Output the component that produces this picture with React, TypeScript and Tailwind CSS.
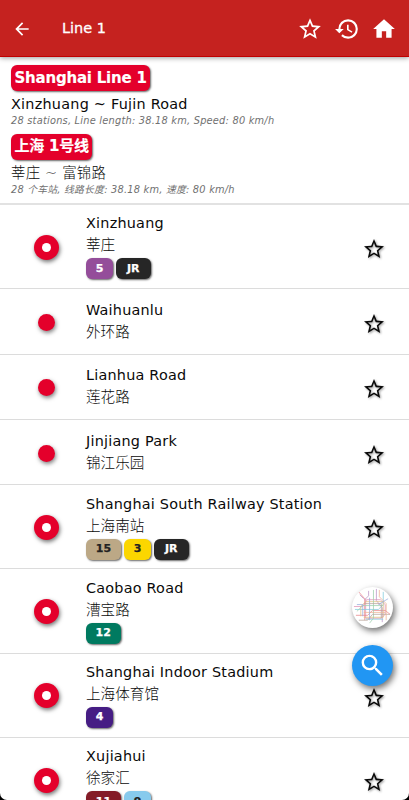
import { MdArrowBack, MdHistory, MdHome, MdSearch, MdStarOutline } from "react-icons/md";

type Transfer = { label: string; className: string };

type Station = {
  name: string;
  localName: string;
  transfers: Transfer[];
};

const JR: Transfer = { label: "JR", className: "bg-[#262626] text-white w-[34.5px]" };

const stations: Station[] = [
  {
    name: "Xinzhuang",
    localName: "莘庄",
    transfers: [{ label: "5", className: "bg-[#944d9a] text-white w-[27px]" }, JR],
  },
  { name: "Waihuanlu", localName: "外环路", transfers: [] },
  { name: "Lianhua Road", localName: "莲花路", transfers: [] },
  { name: "Jinjiang Park", localName: "锦江乐园", transfers: [] },
  {
    name: "Shanghai South Railway Station",
    localName: "上海南站",
    transfers: [
      { label: "15", className: "bg-[#bca886] text-[#222] w-[35px]" },
      { label: "3", className: "bg-[#fcd600] text-[#222] w-[27px]" },
      JR,
    ],
  },
  {
    name: "Caobao Road",
    localName: "漕宝路",
    transfers: [{ label: "12", className: "bg-[#007a60] text-white w-[34.5px]" }],
  },
  {
    name: "Shanghai Indoor Stadium",
    localName: "上海体育馆",
    transfers: [{ label: "4", className: "bg-[#461d84] text-white w-[27px]" }],
  },
  {
    name: "Xujiahui",
    localName: "徐家汇",
    transfers: [
      { label: "11", className: "bg-[#841c28] text-white w-[35px]" },
      { label: "9", className: "bg-[#87caed] text-[#222] w-[27px]" },
    ],
  },
];

function Header() {
  return (
    <header className="relative z-10 flex h-[57px] shrink-0 items-center border-b border-[#c00000] bg-[#c5221f] px-3 pt-0.5 text-white shadow-[0_1px_5px_rgba(0,0,0,0.4)]">
      <MdArrowBack size={20} />
      <h1 className="ml-[30px] flex-1 text-[14.5px] font-normal [-webkit-text-stroke:0.3px_white]">
        Line 1
      </h1>
      <div className="flex items-center gap-[11px]">
        <MdStarOutline size={26} />
        <MdHistory size={26} />
        <MdHome size={26} />
      </div>
    </header>
  );
}

function LineSummary({
  title,
  route,
  routeClassName,
  details,
}: {
  title: string;
  route: string;
  routeClassName: string;
  details: string;
}) {
  return (
    <div className="h-[68.5px]">
      <div className="flex h-[27px]">
        <span className="flex h-[26px] items-center whitespace-nowrap rounded-[6px] bg-[#e4002b] px-[3.5px] text-[15px] font-bold tracking-[-0.22px] text-white shadow-[1px_1px_2px_rgba(0,0,0,0.6)] [-webkit-text-stroke:0.15px_white]">
          {title}
        </span>
      </div>
      <div className={`h-[23px] whitespace-nowrap text-[14.4px] leading-[24px] ${routeClassName}`}>
        {route}
      </div>
      <div className="whitespace-nowrap text-[9.8px] italic leading-[12px] tracking-[0.23px] text-[#707070]">
        {details}
      </div>
    </div>
  );
}

function StationDot({ transfer }: { transfer: boolean }) {
  return (
    <div className="flex w-[93px] justify-center pt-px">
      {transfer ? (
        <span className="flex size-[25px] items-center justify-center rounded-full bg-[#e4002b] shadow-[1px_2px_4px_rgba(0,0,0,0.55)]">
          <span className="size-[9px] rounded-full bg-white" />
        </span>
      ) : (
        <span className="mt-px size-[17px] rounded-full bg-[#e4002b] shadow-[1px_2px_4px_rgba(0,0,0,0.5)]" />
      )}
    </div>
  );
}

function StationRow({ station }: { station: Station }) {
  const hasTransfers = station.transfers.length > 0;
  return (
    <li
      className={`flex shrink-0 items-center border-b border-[#dcdcdc] ${
        hasTransfers ? "h-[84.3px]" : "h-[65.3px]"
      }`}
    >
      <StationDot transfer={hasTransfers} />
      <div className="-ml-[7px] flex-1 whitespace-nowrap pt-[0.5px] text-[14.4px]">
        <div className="h-[21px] leading-[21px] tracking-[0.22px]">{station.name}</div>
        <div className="h-[22px] font-['Noto_Sans_CJK_SC',sans-serif] text-[14.6px] font-light leading-[19px]">
          {station.localName}
        </div>
        {hasTransfers && (
          <div className="mt-0.5 flex h-[22px] gap-[3px]">
            {station.transfers.map((t) => (
              <span
                key={t.label}
                className={`flex h-[21px] items-center justify-center rounded-[6px] text-[11px] font-bold shadow-[1px_1px_2px_rgba(0,0,0,0.6)] [-webkit-text-stroke:0.25px_currentColor] ${t.className}`}
              >
                {t.label}
              </span>
            ))}
          </div>
        )}
      </div>
      <MdStarOutline
        size={24}
        className="mr-[23px] mt-[5px] drop-shadow-[1px_1px_1px_rgba(0,0,0,0.4)]"
      />
    </li>
  );
}

function MapThumbnail() {
  return (
    <svg viewBox="0 0 42 42" className="size-full" fill="none" strokeWidth="0.8" opacity="0.7">
      <path d="M2 20h9l4-7h14l5 5v10l-4 4H14V12" stroke="#d56a9a" />
      <path d="M4 29h12l5-5h13l5 4M6 4l7 8v22" stroke="#e2555c" />
      <path d="M8 8l4 4M17 4v5l-4 4M25 2v12l6 7v15" stroke="#a06ab0" />
      <path d="M3 23h24l5-5V5M14 33h18" stroke="#50b7d0" />
      <path d="M9 30V20l5-5h18v16H12" stroke="#d6a84e" />
      <path d="M5 25l6-6h21M22 3v29l-4 5" stroke="#78bf8c" />
      <path d="M13 17h17v15M7 34h9l5-6h18" stroke="#9d8173" />
      <path d="M28 3v7l7 7v17M12 26h22" stroke="#e59468" />
      <path d="M5 18h6v12M18 11v23M27 18l10-6" stroke="#6f8bd0" />
    </svg>
  );
}

export default function App() {
  return (
    <div className="relative flex h-[800px] w-full flex-col overflow-hidden bg-black font-['DejaVu_Sans','Noto_Sans_CJK_SC',sans-serif]">
      <div className="flex min-h-0 flex-1 flex-col overflow-hidden rounded-b-[7px] bg-white text-[#0a0a0a]">
        <Header />
        <section className="h-[148px] shrink-0 border-b-2 border-[#e2e2e2] pl-[11px] pt-2">
          <LineSummary
            title="Shanghai Line 1"
            route="Xinzhuang ~ Fujin Road"
            routeClassName="tracking-[0.24px]"
            details="28 stations, Line length: 38.18 km, Speed: 80 km/h"
          />
          <LineSummary
            title="上海 1号线"
            route="莘庄 ~ 富锦路"
            routeClassName="font-light tracking-[0.24px]"
            details="28 个车站, 线路长度: 38.18 km, 速度: 80 km/h"
          />
        </section>
        <ul className="flex flex-col">
          {stations.map((s) => (
            <StationRow key={s.name} station={s} />
          ))}
        </ul>
      </div>

      <div className="absolute right-4 top-[587px] flex flex-col gap-[17px]">
        <button
          type="button"
          className="size-[41px] overflow-hidden rounded-full bg-white shadow-[2px_3px_6px_rgba(0,0,0,0.55)]"
        >
          <MapThumbnail />
        </button>
        <button
          type="button"
          className="flex size-[41px] items-center justify-center rounded-full bg-[#2196f3] text-white shadow-[2px_3px_6px_rgba(0,0,0,0.55)]"
        >
          <MdSearch size={29} />
        </button>
      </div>
    </div>
  );
}
